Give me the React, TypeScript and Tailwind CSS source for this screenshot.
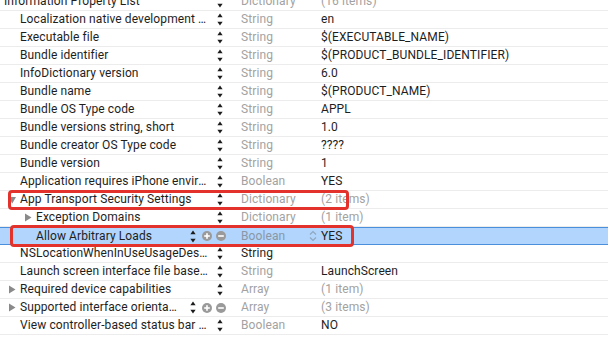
import type { ReactNode } from 'react';

type Row = {
  key: string;
  type: string;
  value: string;
  level?: number;
  disclosure?: 'open' | 'closed';
  muted?: boolean;
  typeDark?: boolean;
  buttons?: boolean;
  selected?: boolean;
  box?: 'a' | 'b';
};

const rows: Row[] = [
  { key: 'Information Property List', type: 'Dictionary', value: '(16 items)', level: 0, muted: true },
  { key: 'Localization native development region', type: 'String', value: 'en' },
  { key: 'Executable file', type: 'String', value: '$(EXECUTABLE_NAME)' },
  { key: 'Bundle identifier', type: 'String', value: '$(PRODUCT_BUNDLE_IDENTIFIER)' },
  { key: 'InfoDictionary version', type: 'String', value: '6.0' },
  { key: 'Bundle name', type: 'String', value: '$(PRODUCT_NAME)' },
  { key: 'Bundle OS Type code', type: 'String', value: 'APPL' },
  { key: 'Bundle versions string, short', type: 'String', value: '1.0' },
  { key: 'Bundle creator OS Type code', type: 'String', value: '????' },
  { key: 'Bundle version', type: 'String', value: '1' },
  { key: 'Application requires iPhone environment', type: 'Boolean', value: 'YES' },
  { key: 'App Transport Security Settings', type: 'Dictionary', value: '(2 items)', disclosure: 'open', muted: true, box: 'a' },
  { key: 'Exception Domains', type: 'Dictionary', value: '(1 item)', level: 2, disclosure: 'closed', muted: true },
  { key: 'Allow Arbitrary Loads', type: 'Boolean', value: 'YES', level: 2, buttons: true, selected: true, box: 'b' },
  { key: 'NSLocationWhenInUseUsageDescription', type: 'String', value: '', typeDark: true },
  { key: 'Launch screen interface file base name', type: 'String', value: 'LaunchScreen' },
  { key: 'Required device capabilities', type: 'Array', value: '(1 item)', disclosure: 'closed', muted: true },
  { key: 'Supported interface orientations', type: 'Array', value: '(3 items)', disclosure: 'closed', muted: true, buttons: true },
  { key: 'View controller-based status bar appearance', type: 'Boolean', value: 'NO' },
];

function Stepper() {
  return (
    <svg width="6" height="13" viewBox="0 0 6 13" className="shrink-0">
      <path d="M3 0.5 L5.6 4.2 L0.4 4.2 Z" fill="#1c1c1c" />
      <path d="M3 12.5 L5.6 8.8 L0.4 8.8 Z" fill="#1c1c1c" />
    </svg>
  );
}

function RoundButton({ plus }: { plus?: boolean }) {
  return (
    <svg width="10" height="10" viewBox="0 0 10 10" className="shrink-0">
      <circle cx="5" cy="5" r="5" fill="#9a9a9a" />
      <rect x="2.2" y="4.2" width="5.6" height="1.6" fill="#fff" />
      {plus && <rect x="4.2" y="2.2" width="1.6" height="5.6" fill="#fff" />}
    </svg>
  );
}

function Triangle({ open }: { open?: boolean }) {
  return open ? (
    <svg width="9" height="8" viewBox="0 0 9 8">
      <path d="M0.5 1 L8 1 L4.25 7.5 Z" fill="#8a8a8a" />
    </svg>
  ) : (
    <svg width="8" height="9" viewBox="0 0 8 9">
      <path d="M1 0.5 L7.5 4.5 L1 8.5 Z" fill="#8a8a8a" />
    </svg>
  );
}

function UpDown() {
  return (
    <svg width="8" height="12" viewBox="0 0 8 12" className="shrink-0">
      <path d="M1 4.5 L4 1.5 L7 4.5" fill="none" stroke="#8fa6bf" strokeWidth="1.1" />
      <path d="M1 7.5 L4 10.5 L7 7.5" fill="none" stroke="#8fa6bf" strokeWidth="1.1" />
    </svg>
  );
}

function Box({ kind }: { kind: 'a' | 'b' }) {
  return kind === 'a' ? (
    <div className="pointer-events-none absolute left-[8px] top-[-1px] h-[20px] w-[341px] rounded-[4px] border-[3px] border-[#e2322b]" />
  ) : (
    <div className="pointer-events-none absolute left-[10px] top-[-3px] h-[22px] w-[344px] rounded-[4px] border-[3px] border-[#e2322b]" />
  );
}

function PlistRow({ row }: { row: Row }) {
  const level = row.level ?? 1;
  const indent = level === 0 ? 'pl-0' : level === 1 ? 'pl-[8px]' : 'pl-[24px]';
  let key: ReactNode = row.key;
  return (
    <div
      className={
        'relative flex h-[18px] items-center ' +
        (row.selected ? 'border-y border-[#4a8fdb] bg-[#b1d5fc]' : 'border-b border-[#ececec]')
      }
    >
      <div className={'flex w-[241px] shrink-0 items-center ' + indent}>
        <div className={'flex shrink-0 items-center ' + (level === 0 ? 'w-[4px]' : 'w-[12px]')}>
          {row.disclosure && <Triangle open={row.disclosure === 'open'} />}
        </div>
        <div className="min-w-0 flex-1 truncate text-[#1e1e1e]">{key}</div>
        {row.buttons ? (
          <div className="flex items-center pl-[10px] pr-[15px]">
            <Stepper />
            <div className="ml-[6px]">
              <RoundButton plus />
            </div>
            <div className="ml-[4px]">
              <RoundButton />
            </div>
          </div>
        ) : (
          <div className="flex items-center pl-[7px] pr-[18px]">
            <Stepper />
          </div>
        )}
      </div>
      <div
        className={
          'w-[80px] shrink-0 ' +
          (row.typeDark ? 'text-[#1e1e1e]' : row.selected ? 'text-[#8a97a6]' : 'text-[#a2a2a2]')
        }
      >
        {row.type}
      </div>
      <div className={'relative flex-1 ' + (row.muted ? 'text-[#a2a2a2]' : 'text-[#1e1e1e]')}>
        {row.selected && (
          <div className="absolute left-[-12px] top-[2px]">
            <UpDown />
          </div>
        )}
        {row.value}
      </div>
      {row.box && <Box kind={row.box} />}
    </div>
  );
}

export default function App() {
  return (
    <div className="h-[349px] w-[608px] overflow-hidden bg-white font-['Roboto','Liberation_Sans',sans-serif] text-[12px] leading-[17px] tracking-[0.1px]">
      <div className="-mt-[7px]">
        {rows.map((r) => (
          <PlistRow key={r.key} row={r} />
        ))}
      </div>
    </div>
  );
}
